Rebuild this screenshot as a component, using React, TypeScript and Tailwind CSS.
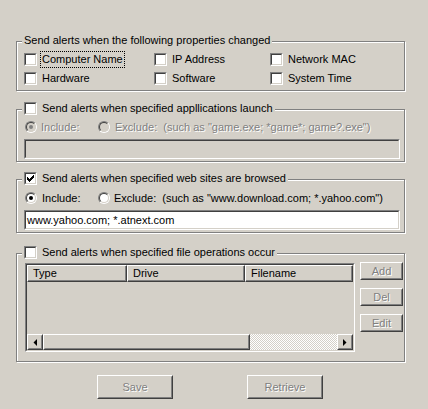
import React from "react";

const DIS = "text-[#808080] [text-shadow:1px_1px_0_#fff]";

function Check({ checked = false }: { checked?: boolean }) {
  return (
    <div className="w-[13px] h-[13px] shrink-0 border border-t-[#808080] border-l-[#808080] border-b-white border-r-white">
      <div className="w-full h-full border border-t-[#404040] border-l-[#404040] border-b-[#d4d0c8] border-r-[#d4d0c8] bg-white">
        {checked && (
          <svg width="9" height="9" className="block">
            <rect x="1" y="3" width="1" height="3" fill="#000" />
            <rect x="2" y="4" width="1" height="3" fill="#000" />
            <rect x="3" y="5" width="1" height="3" fill="#000" />
            <rect x="4" y="4" width="1" height="3" fill="#000" />
            <rect x="5" y="3" width="1" height="3" fill="#000" />
            <rect x="6" y="2" width="1" height="3" fill="#000" />
            <rect x="7" y="1" width="1" height="3" fill="#000" />
          </svg>
        )}
      </div>
    </div>
  );
}

function Radio({ checked = false, disabled = false }: { checked?: boolean; disabled?: boolean }) {
  return (
    <div className="w-[12px] h-[12px] shrink-0 rounded-full border border-t-[#808080] border-l-[#808080] border-b-white border-r-white">
      <div
        className={`w-full h-full rounded-full border border-t-[#404040] border-l-[#404040] border-b-[#d4d0c8] border-r-[#d4d0c8] flex items-center justify-center ${
          disabled ? "bg-[#d4d0c8]" : "bg-white"
        }`}
      >
        {checked && (
          <div className={`w-[4px] h-[4px] rounded-full ${disabled ? "bg-[#808080]" : "bg-black"}`} />
        )}
      </div>
    </div>
  );
}

function Raised({ className = "", children }: { className?: string; children?: React.ReactNode }) {
  return (
    <div className={`shrink-0 border border-t-white border-l-white border-b-[#404040] border-r-[#404040] ${className}`}>
      <div className="w-full h-full border border-t-[#d4d0c8] border-l-[#d4d0c8] border-b-[#808080] border-r-[#808080] flex items-center justify-center">
        {children}
      </div>
    </div>
  );
}

function Sunken({ className = "", inner = "", children }: { className?: string; inner?: string; children?: React.ReactNode }) {
  return (
    <div className={`border border-t-[#808080] border-l-[#808080] border-b-white border-r-white ${className}`}>
      <div className={`w-full h-full border border-t-[#404040] border-l-[#404040] border-b-[#d4d0c8] border-r-[#d4d0c8] ${inner}`}>
        {children}
      </div>
    </div>
  );
}

function Group({ className = "", label, children }: { className?: string; label: React.ReactNode; children?: React.ReactNode }) {
  return (
    <div className={`relative ml-[16px] w-[389px] border border-[#808080] shadow-[inset_1px_1px_0_#fff,1px_1px_0_#fff] ${className}`}>
      <div className="absolute left-[5px] -top-[8px] h-[13px] flex items-center gap-[5px] bg-[#d4d0c8] px-[2px] leading-[13px] whitespace-nowrap">
        {label}
      </div>
      {children}
    </div>
  );
}

function CheckItem({ label, focus = false }: { label: string; focus?: boolean }) {
  return (
    <div className="flex items-center h-[13px] whitespace-nowrap">
      <Check />
      {focus ? (
        <span className="ml-[4px] px-[1px] leading-[15px] outline-1 outline-dotted outline-black">{label}</span>
      ) : (
        <span className="ml-[5px] leading-[13px]">{label}</span>
      )}
    </div>
  );
}

function ArrowL() {
  return (
    <svg width="4" height="7" className="block">
      <path d="M4 0V7L0.5 3.5Z" fill="#000" />
    </svg>
  );
}
function ArrowR() {
  return (
    <svg width="4" height="7" className="block">
      <path d="M0 0V7L3.5 3.5Z" fill="#000" />
    </svg>
  );
}

export default function App() {
  return (
    <div className="w-[428px] h-[409px] bg-[#d4d0c8] text-black text-[11px] font-['Liberation_Sans',Arial,sans-serif] flex flex-col overflow-hidden">
      {/* Group 1 */}
      <Group className="mt-[41px] h-[50px]" label={<span>Send alerts when the following properties changed</span>}>
        <div className="grid grid-cols-[130px_116px_1fr] gap-y-[6px] pl-[7px] pt-[11px]">
          <CheckItem label="Computer Name" focus />
          <CheckItem label="IP Address" />
          <CheckItem label="Network MAC" />
          <CheckItem label="Hardware" />
          <CheckItem label="Software" />
          <CheckItem label="System Time" />
        </div>
      </Group>

      {/* Group 2 */}
      <Group
        className="mt-[18px] h-[53px]"
        label={
          <>
            <Check />
            <span>Send alerts when specified appllications launch</span>
          </>
        }
      >
        <div className="pl-[8px] pt-[11px]">
          <div className="flex items-center h-[12px] whitespace-nowrap">
            <div className="flex items-center w-[73px]">
              <Radio checked disabled />
              <span className={`ml-[4px] ${DIS}`}>Include:</span>
            </div>
            <Radio disabled />
            <span className={`ml-[5px] ${DIS}`}>Exclude:&nbsp; (such as "game.exe; *game*; game?.exe")</span>
          </div>
          <Sunken className="mt-[6px] -ml-[1px] w-[376px] h-[20px]" inner="bg-[#d4d0c8]" />
        </div>
      </Group>

      {/* Group 3 */}
      <Group
        className="mt-[17px] h-[54px]"
        label={
          <>
            <Check checked />
            <span>Send alerts when specified web sites are browsed</span>
          </>
        }
      >
        <div className="pl-[8px] pt-[12px]">
          <div className="flex items-center h-[12px] whitespace-nowrap">
            <div className="flex items-center w-[73px]">
              <Radio checked />
              <span className="ml-[5px]">Include:</span>
            </div>
            <Radio />
            <span className="ml-[4px]">Exclude:&nbsp; (such as "www.download.com; *.yahoo.com")</span>
          </div>
          <Sunken className="mt-[6px] -ml-[1px] w-[376px] h-[20px]" inner="bg-white flex items-center pl-[1px] leading-[14px]">
            <span>www.yahoo.com; *.atnext.com</span>
          </Sunken>
        </div>
      </Group>

      {/* Group 4 */}
      <Group
        className="mt-[20px] h-[109px]"
        label={
          <>
            <Check />
            <span>Send alerts when specified file operations occur</span>
          </>
        }
      >
        <div className="flex pl-[8px] pt-[9px]">
          <Sunken className="w-[330px] h-[89px]" inner="bg-[#d4d0c8] flex flex-col">
            <div className="flex h-[17px] shrink-0">
              <div className="w-[100px] h-full border border-t-white border-l-white border-b-[#404040] border-r-[#404040]">
                <div className="h-full border-b border-r border-b-[#808080] border-r-[#808080] flex items-center pl-[5px]">Type</div>
              </div>
              <div className="w-[118px] h-full border border-t-white border-l-white border-b-[#404040] border-r-[#404040]">
                <div className="h-full border-b border-r border-b-[#808080] border-r-[#808080] flex items-center pl-[5px]">Drive</div>
              </div>
              <div className="flex-1 h-full border border-t-white border-l-white border-b-[#404040] border-r-[#404040]">
                <div className="h-full border-b border-r border-b-[#808080] border-r-[#808080] flex items-center pl-[5px]">Filename</div>
              </div>
            </div>
            <div className="flex-1" />
            <div className="flex h-[16px] shrink-0">
              <Raised className="w-[16px] h-[16px]">
                <ArrowL />
              </Raised>
              <Raised className="w-[207px] h-[16px]" />
              <div className="flex-1 h-full bg-[repeating-conic-gradient(#ffffff_0_25%,#d4d0c8_0_50%)] bg-[length:2px_2px]" />
              <Raised className="w-[16px] h-[16px]">
                <ArrowR />
              </Raised>
            </div>
          </Sunken>
          <div className="ml-[5px] -mt-[1px] flex flex-col gap-[8px]">
            <Raised className="w-[43px] h-[18px]">
              <span className={DIS}>Add</span>
            </Raised>
            <Raised className="w-[43px] h-[18px]">
              <span className={DIS}>Del</span>
            </Raised>
            <Raised className="w-[43px] h-[18px]">
              <span className={DIS}>Edit</span>
            </Raised>
          </div>
        </div>
      </Group>

      {/* Bottom buttons */}
      <div className="flex pl-[97px] mt-[13px] gap-[74px]">
        <Raised className="w-[76px] h-[24px]">
          <span className={DIS}>Save</span>
        </Raised>
        <Raised className="w-[76px] h-[24px]">
          <span className={DIS}>Retrieve</span>
        </Raised>
      </div>
    </div>
  );
}
